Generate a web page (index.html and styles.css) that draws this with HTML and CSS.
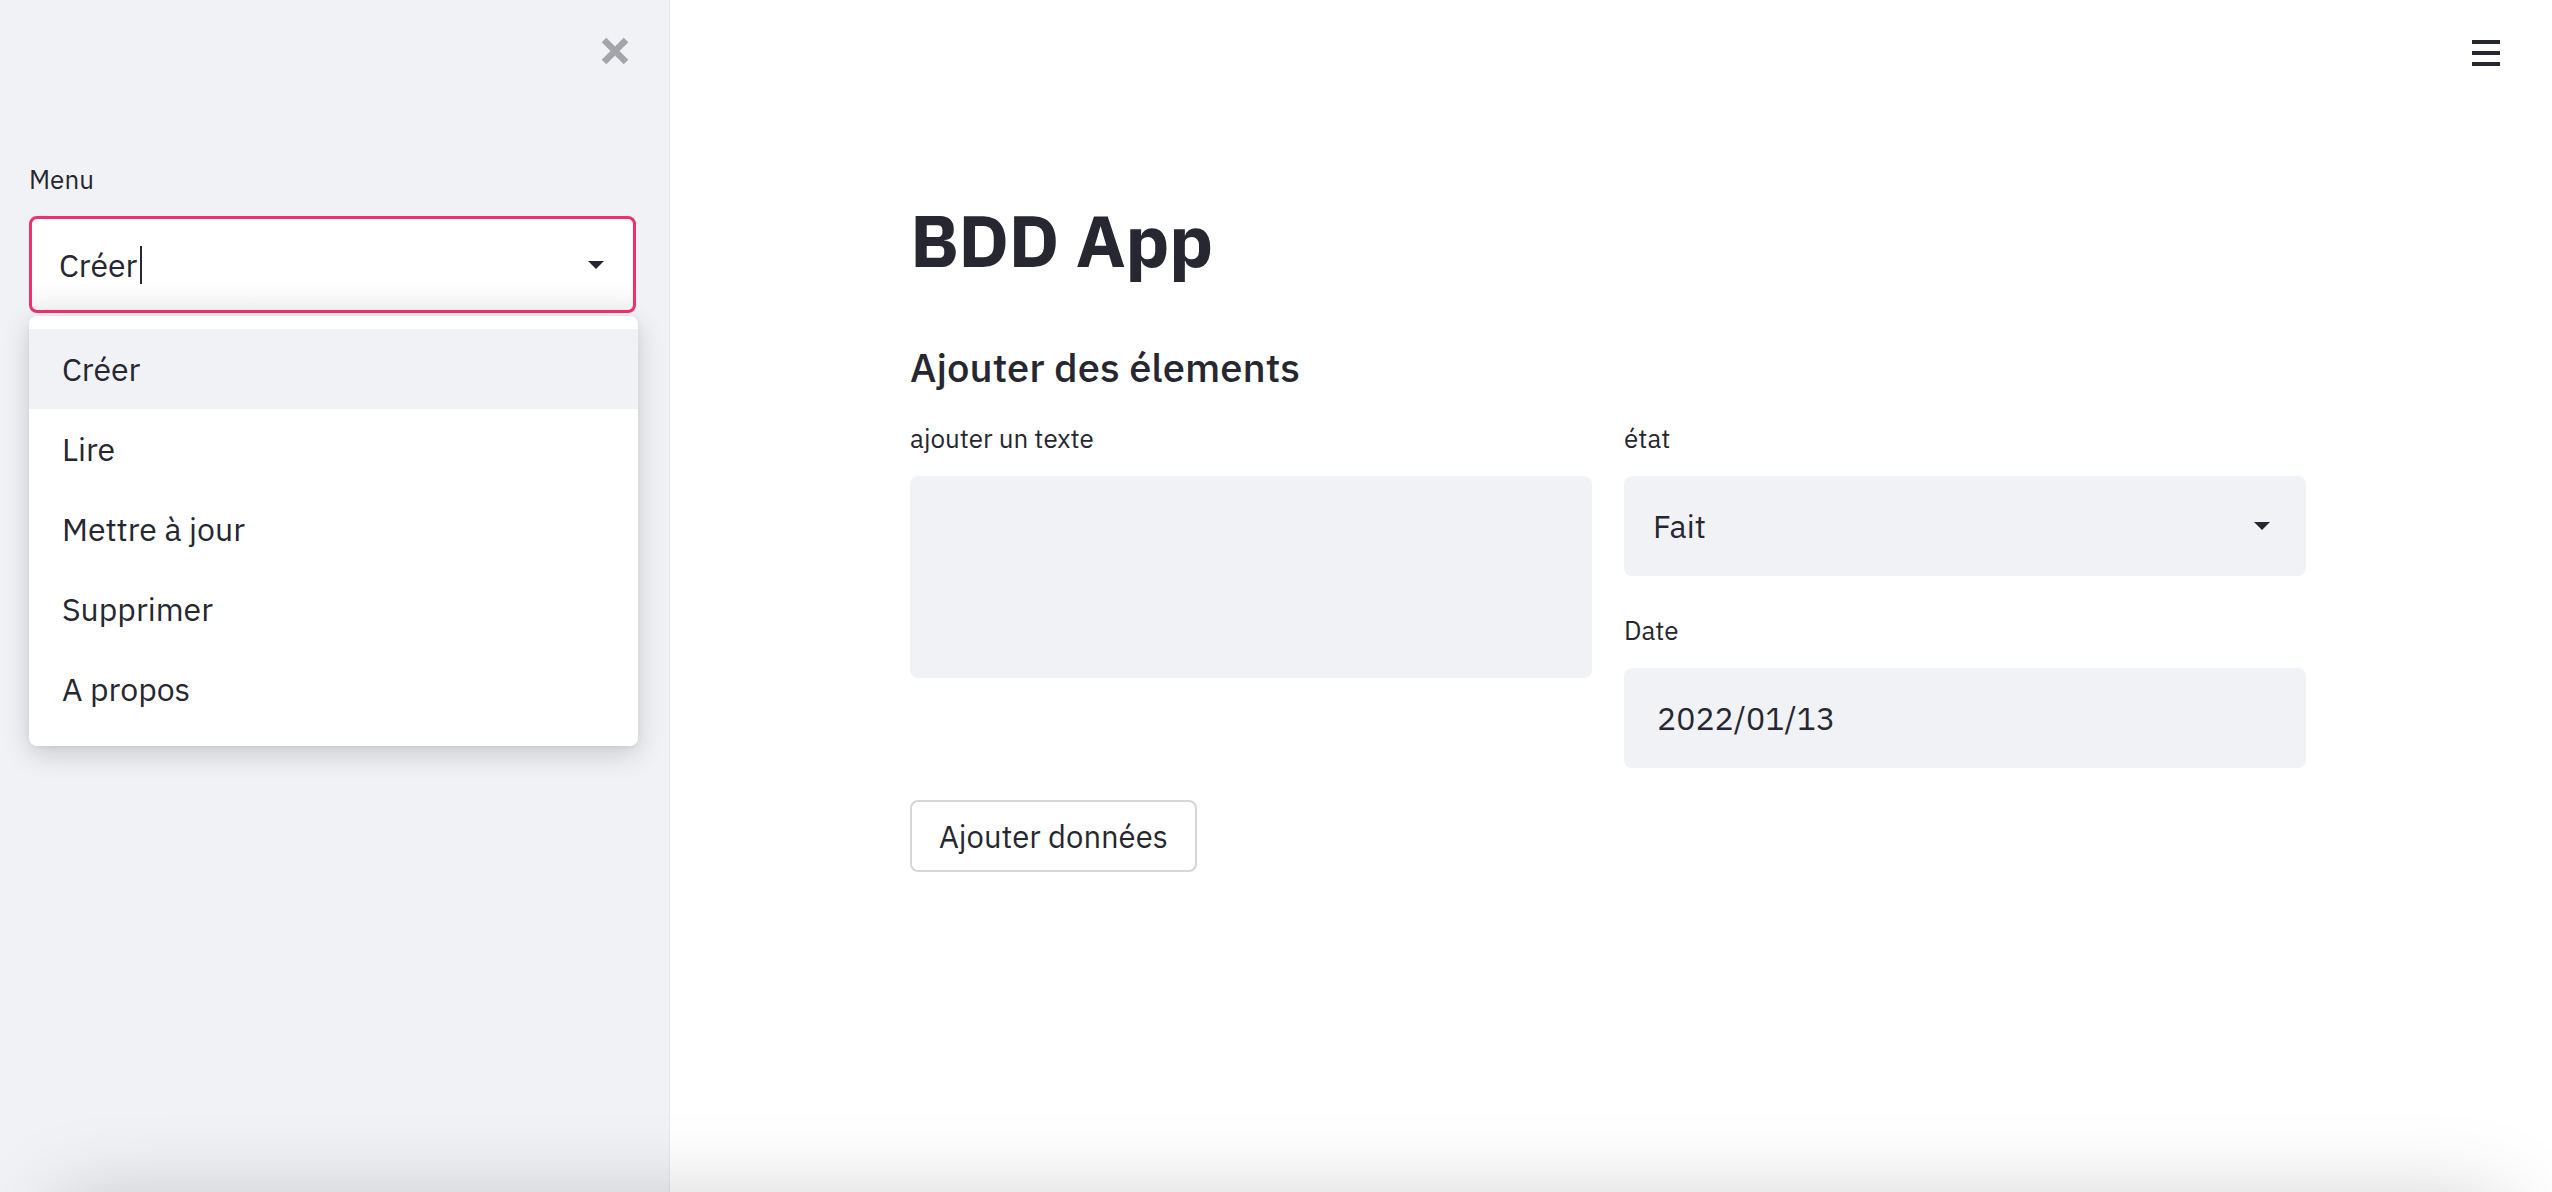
FILE: index.html
```html
<!DOCTYPE html>
<html lang="fr">
<head>
<meta charset="utf-8">
<title>BDD App</title>
<link rel="stylesheet" href="styles.css">
</head>
<body>
<div class="app">
  <aside class="sidebar">
    <div class="sidebar-top">
      <button class="close-btn" aria-label="Fermer">
        <svg width="30" height="30" viewBox="0 0 30 30"><path d="M4 4 L26 26 M26 4 L4 26" stroke="#a3a5ab" stroke-width="6.5" stroke-linecap="butt"/></svg>
      </button>
    </div>
    <div class="field">
      <label class="label side-label">Menu</label>
      <div class="select focused">
        <span class="select-value">Créer<span class="cursor"></span></span>
        <span class="caret"></span>
      </div>
      <ul class="dropdown">
        <li class="option active">Créer</li>
        <li class="option">Lire</li>
        <li class="option">Mettre à jour</li>
        <li class="option">Supprimer</li>
        <li class="option">A propos</li>
      </ul>
    </div>
  </aside>
  <main class="main">
    <header class="topbar">
      <button class="hamburger" aria-label="Menu"><span></span><span></span><span></span></button>
    </header>
    <section class="content">
      <h1 class="title">BDD App</h1>
      <h3 class="subtitle">Ajouter des élements</h3>
      <div class="columns">
        <div class="col">
          <label class="label">ajouter un texte</label>
          <div class="textarea"></div>
        </div>
        <div class="col">
          <label class="label">état</label>
          <div class="select gray">
            <span class="select-value">Fait</span>
            <span class="caret"></span>
          </div>
          <label class="label date-label">Date</label>
          <div class="input gray">2022/01/13</div>
        </div>
      </div>
      <button class="btn">Ajouter données</button>
    </section>
  </main>
  <div class="bottom-shade"></div>
</div>
</body>
</html>
```

FILE: styles.css
```css
* { box-sizing: border-box; }
html, body { margin: 0; padding: 0; }
body {
  font-family: "IBM Plex Sans", "Inter", "Noto Sans", sans-serif;
  color: #262730;
  background: #fff;
  width: 2552px;
  height: 1192px;
  overflow: hidden;
}
.app {
  display: flex;
  height: 1192px;
  position: relative;
  overflow: hidden;
}
.sidebar {
  width: 670px;
  flex: 0 0 670px;
  background: #f0f2f6;
  border-right: 1px solid #e6e8ec;
  padding: 0 32px 0 29px;
  display: flex;
  flex-direction: column;
}
.sidebar-top {
  height: 161px;
  display: flex;
  justify-content: flex-end;
  align-items: flex-start;
  padding-top: 36px;
  padding-right: 7px;
}
.close-btn {
  border: 0;
  background: none;
  padding: 0;
  width: 30px;
  height: 30px;
  display: block;
}
.close-btn svg { display: block; }
.field { position: relative; }
.label {
  display: block;
  font-size: 26px;
  line-height: 36px;
  color: #262730;
  margin-bottom: 22px;
}
.side-label { margin-bottom: 19px; }
.select {
  height: 97px;
  border-radius: 8px;
  display: flex;
  align-items: center;
  justify-content: space-between;
  padding: 0 29px 0 27px;
  font-size: 32px;
}
.select.focused {
  background: linear-gradient(#fff 0, #fff 70%, #f3f3f4 100%);
  border: 3px solid #f0306a;
  width: 607px;
}
.select.gray {
  background: #f0f2f6;
  height: 100px;
  padding: 0 36px 0 29px;
}
.select-value { display: flex; align-items: center; }
.cursor {
  display: inline-block;
  width: 2px;
  height: 38px;
  background: #262730;
  margin-left: 3px;
}
.caret {
  width: 0;
  height: 0;
  border-left: 8px solid transparent;
  border-right: 8px solid transparent;
  border-top: 8px solid #262730;
}
.dropdown {
  position: absolute;
  left: 0;
  top: 155px;
  width: 609px;
  margin: 0;
  list-style: none;
  background: #fff;
  border-radius: 8px;
  padding: 13px 0 17px;
  box-shadow: 0 8px 28px rgba(0, 0, 0, 0.16), 0 2px 6px rgba(0, 0, 0, 0.06);
  z-index: 5;
}
.option {
  height: 80px;
  display: flex;
  align-items: center;
  padding-left: 33px;
  font-size: 32px;
}
.option.active { background: #f0f2f6; }

.main {
  flex: 1;
  display: flex;
  flex-direction: column;
  position: relative;
}
.topbar {
  height: 100px;
  display: flex;
  justify-content: flex-end;
  padding: 40px 52px 0 0;
}
.hamburger {
  border: 0;
  background: none;
  padding: 0;
  width: 28px;
  height: 26px;
  display: flex;
  flex-direction: column;
  justify-content: space-between;
}
.hamburger span {
  display: block;
  height: 4px;
  width: 28px;
  background: #262730;
}
.content {
  width: 1396px;
  margin-left: 240px;
}
.title {
  margin: 92px 0 0;
  font-size: 73px;
  font-weight: 700;
  line-height: 96px;
  letter-spacing: -0.5px;
}
.subtitle {
  margin: 51px 0 0;
  font-size: 40px;
  font-weight: 500;
  line-height: 56px;
}
.columns {
  display: grid;
  grid-template-columns: 682px 682px;
  column-gap: 32px;
  margin-top: 25px;
}
.columns .label { margin-bottom: 20px; }
.textarea {
  height: 202px;
  background: #f0f2f6;
  border-radius: 8px;
}
.columns .date-label { margin-top: 36px; margin-bottom: 20px; }
.input {
  height: 100px;
  border-radius: 8px;
  background: #f0f2f6;
  display: flex;
  align-items: center;
  padding-left: 33px;
  font-size: 32px;
}
.btn {
  margin-top: 32px;
  height: 72px;
  padding: 0 27px;
  font-family: inherit;
  font-size: 31px;
  color: #262730;
  background: #fff;
  border: 2px solid #d6d6d9;
  border-radius: 8px;
}
.bottom-shade {
  position: absolute;
  left: 60px;
  right: 50px;
  top: 1215px;
  height: 100px;
  box-shadow: 0 -10px 90px rgba(0, 0, 0, 0.22);
  background: #fff;
  pointer-events: none;
}
```
